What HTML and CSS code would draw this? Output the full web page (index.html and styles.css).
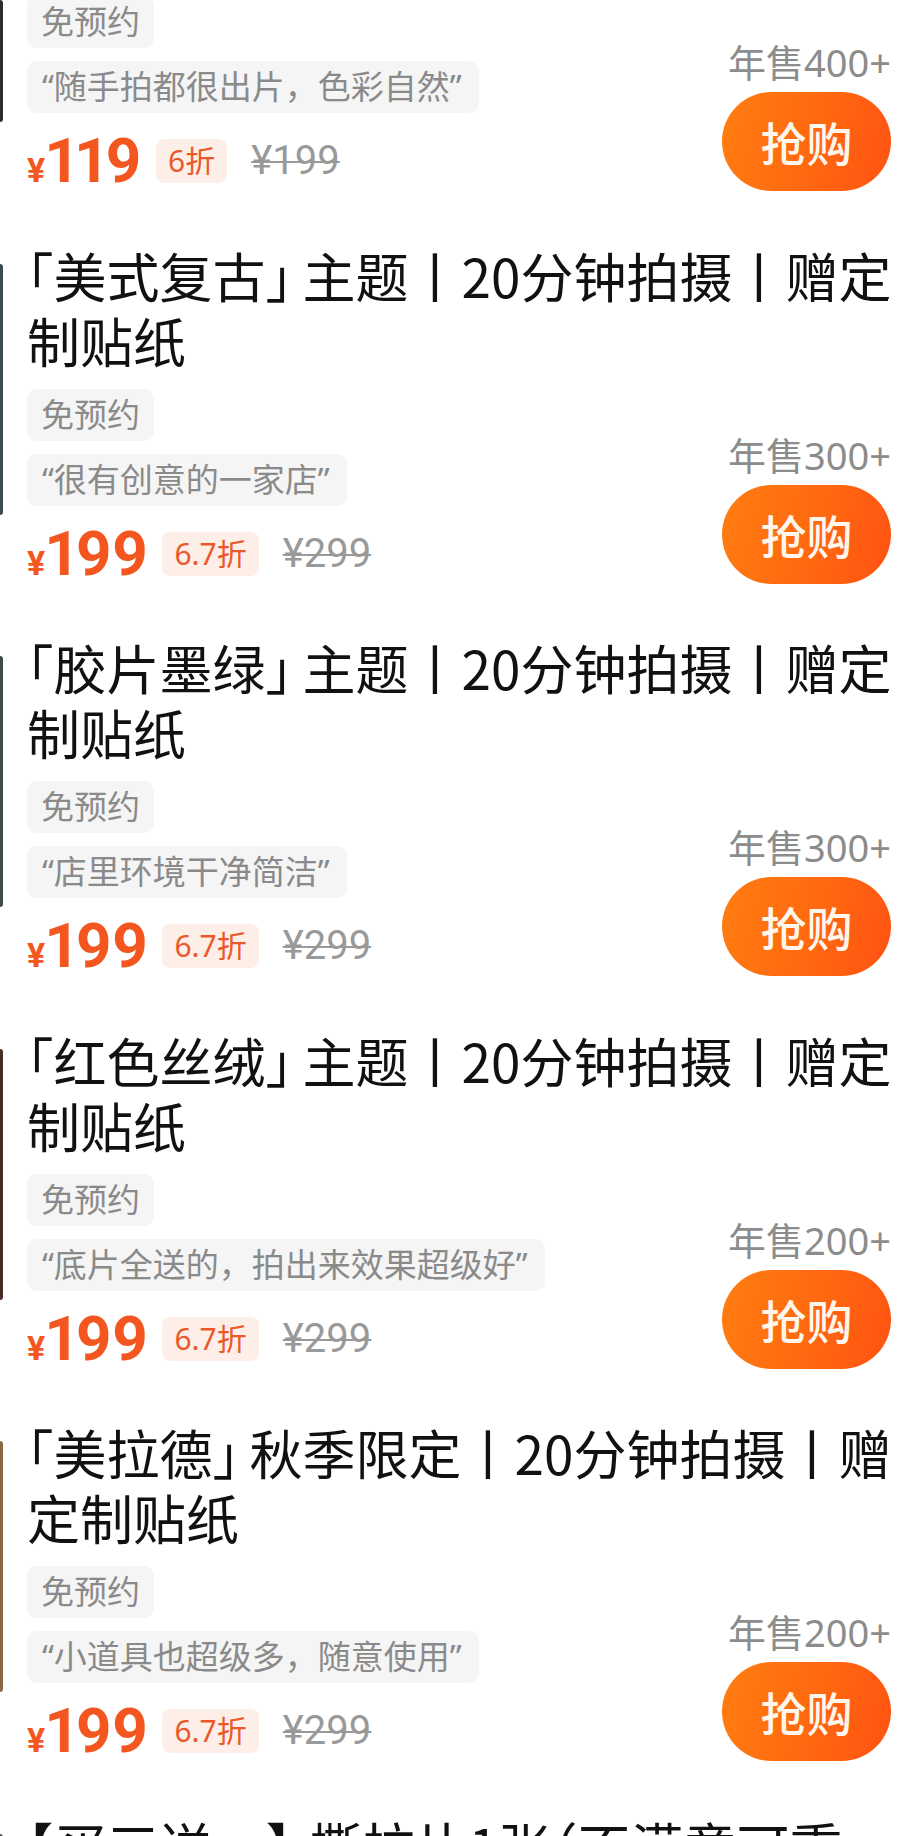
FILE: index.html
```html
<!DOCTYPE html>
<html lang="zh-CN">
<head>
<meta charset="utf-8">
<title>套餐列表</title>
<link rel="stylesheet" href="styles.css">
</head>
<body>
<div class="feed">

  <div class="card card-first">
    <div class="thumb thumb-1"></div>
    <div class="main">
      <div class="bottom">
        <div class="info">
          <span class="tag">免预约</span>
          <span class="quote">“随手拍都很出片，色彩自然”</span>
          <div class="price-row">
            <span class="price"><span class="yen">¥</span>119</span>
            <span class="discount">6折</span>
            <span class="orig">¥199</span>
          </div>
        </div>
        <div class="aside">
          <span class="sales">年售400+</span>
          <button class="buy">抢购</button>
        </div>
      </div>
    </div>
  </div>

  <div class="card">
    <div class="thumb thumb-2"></div>
    <div class="main">
      <div class="title">「美式复古」&#8201;主题丨20分钟拍摄丨赠定制贴纸</div>
      <div class="bottom">
        <div class="info">
          <span class="tag">免预约</span>
          <span class="quote">“很有创意的一家店”</span>
          <div class="price-row">
            <span class="price"><span class="yen">¥</span>199</span>
            <span class="discount">6.7折</span>
            <span class="orig">¥299</span>
          </div>
        </div>
        <div class="aside">
          <span class="sales">年售300+</span>
          <button class="buy">抢购</button>
        </div>
      </div>
    </div>
  </div>

  <div class="card">
    <div class="thumb thumb-3"></div>
    <div class="main">
      <div class="title">「胶片墨绿」&#8201;主题丨20分钟拍摄丨赠定制贴纸</div>
      <div class="bottom">
        <div class="info">
          <span class="tag">免预约</span>
          <span class="quote">“店里环境干净简洁”</span>
          <div class="price-row">
            <span class="price"><span class="yen">¥</span>199</span>
            <span class="discount">6.7折</span>
            <span class="orig">¥299</span>
          </div>
        </div>
        <div class="aside">
          <span class="sales">年售300+</span>
          <button class="buy">抢购</button>
        </div>
      </div>
    </div>
  </div>

  <div class="card">
    <div class="thumb thumb-4"></div>
    <div class="main">
      <div class="title">「红色丝绒」&#8201;主题丨20分钟拍摄丨赠定制贴纸</div>
      <div class="bottom">
        <div class="info">
          <span class="tag">免预约</span>
          <span class="quote">“底片全送的，拍出来效果超级好”</span>
          <div class="price-row">
            <span class="price"><span class="yen">¥</span>199</span>
            <span class="discount">6.7折</span>
            <span class="orig">¥299</span>
          </div>
        </div>
        <div class="aside">
          <span class="sales">年售200+</span>
          <button class="buy">抢购</button>
        </div>
      </div>
    </div>
  </div>

  <div class="card">
    <div class="thumb thumb-5"></div>
    <div class="main">
      <div class="title">「美拉德」&#8201;秋季限定丨20分钟拍摄丨赠定制贴纸</div>
      <div class="bottom">
        <div class="info">
          <span class="tag">免预约</span>
          <span class="quote">“小道具也超级多，随意使用”</span>
          <div class="price-row">
            <span class="price"><span class="yen">¥</span>199</span>
            <span class="discount">6.7折</span>
            <span class="orig">¥299</span>
          </div>
        </div>
        <div class="aside">
          <span class="sales">年售200+</span>
          <button class="buy">抢购</button>
        </div>
      </div>
    </div>
  </div>

  <div class="card">
    <div class="thumb thumb-6"></div>
    <div class="main">
      <div class="title">【买三送一】&#8196;撕拉片1张（不满意可重拍）</div>
    </div>
  </div>

</div>
</body>
</html>
```

FILE: styles.css
```css
* {
  box-sizing: border-box;
  margin: 0;
  padding: 0;
}

html, body {
  background: #ffffff;
}

body {
  width: 915px;
  height: 1836px;
  overflow: hidden;
  font-family: "Noto Sans", "Noto Sans CJK SC", sans-serif;
}

.feed {
  display: flex;
  flex-direction: column;
}

.card {
  display: flex;
  align-items: flex-start;
  padding-bottom: 51.5px;
}

.thumb {
  flex: none;
  width: 3px;
  height: 251px;
  margin-top: 21px;
  border-radius: 0 3px 3px 0;
  background: #333;
}

.card-first .thumb {
  margin-top: 0;
  height: 122px;
}

.thumb-1 { background: #2b2d2e; }
.thumb-2 { background: #3a4a4f; }
.thumb-3 { background: #3e4a42; }
.thumb-4 { background: #4a2c26; }
.thumb-5 { background: #8a6844; }
.thumb-6 { background: #555; }

.main {
  flex: 1;
  min-width: 0;
  margin: 0 24px;
  display: flex;
  flex-direction: column;
}

.card-first .main {
  margin-top: -4px;
}

.title {
  margin-right: -8px;
  font-family: "Noto Sans CJK SC", sans-serif;
  font-size: 53px;
  line-height: 65px;
  color: #111111;
  font-feature-settings: "halt";
}

.bottom {
  display: flex;
  justify-content: space-between;
  align-items: flex-end;
  margin-top: 16px;
}

.card-first .bottom {
  margin-top: 0;
}

.info {
  display: flex;
  flex-direction: column;
  align-items: flex-start;
  gap: 13px;
}

.tag,
.quote {
  display: inline-block;
  height: 52px;
  line-height: 52px;
  padding: 0 14px;
  border-radius: 10px;
  background: #f5f5f5;
  color: #8a8a8a;
  font-size: 33px;
  white-space: nowrap;
}

.quote {
  padding: 0 17px 0 15px;
}

.price-row {
  display: flex;
  align-items: center;
  height: 60px;
  margin-top: 5px;
}

.price {
  font-family: Roboto, "Noto Sans", sans-serif;
  font-weight: 700;
  font-size: 62px;
  line-height: 60px;
  color: #f4561f;
  font-variant-numeric: proportional-nums;
}

.yen {
  font-size: 34px;
  line-height: 1;
  margin-right: 1px;
}

.discount {
  margin-left: 14px;
  height: 44px;
  line-height: 44px;
  padding: 0 12px;
  border-radius: 8px;
  background: #fdefe8;
  color: #e9592b;
  font-size: 30px;
}

.orig {
  margin-left: 24px;
  font-family: Roboto, "Noto Sans", sans-serif;
  font-size: 40px;
  line-height: 40px;
  color: #999999;
  text-decoration: line-through;
  text-decoration-thickness: 2px;
}

.aside {
  display: flex;
  flex-direction: column;
  align-items: flex-end;
}

.sales {
  font-size: 38px;
  line-height: 44px;
  color: #8c8c8c;
  margin-bottom: 8px;
  white-space: nowrap;
}

.buy {
  width: 169px;
  height: 99px;
  border: none;
  border-radius: 50px;
  background: linear-gradient(105deg, #ff7e10 0%, #ff6a10 50%, #ff5213 100%);
  color: #fff7ec;
  font-family: "Noto Sans CJK SC", sans-serif;
  font-size: 46px;
  font-weight: 500;
  line-height: 99px;
  text-align: center;
}
```
